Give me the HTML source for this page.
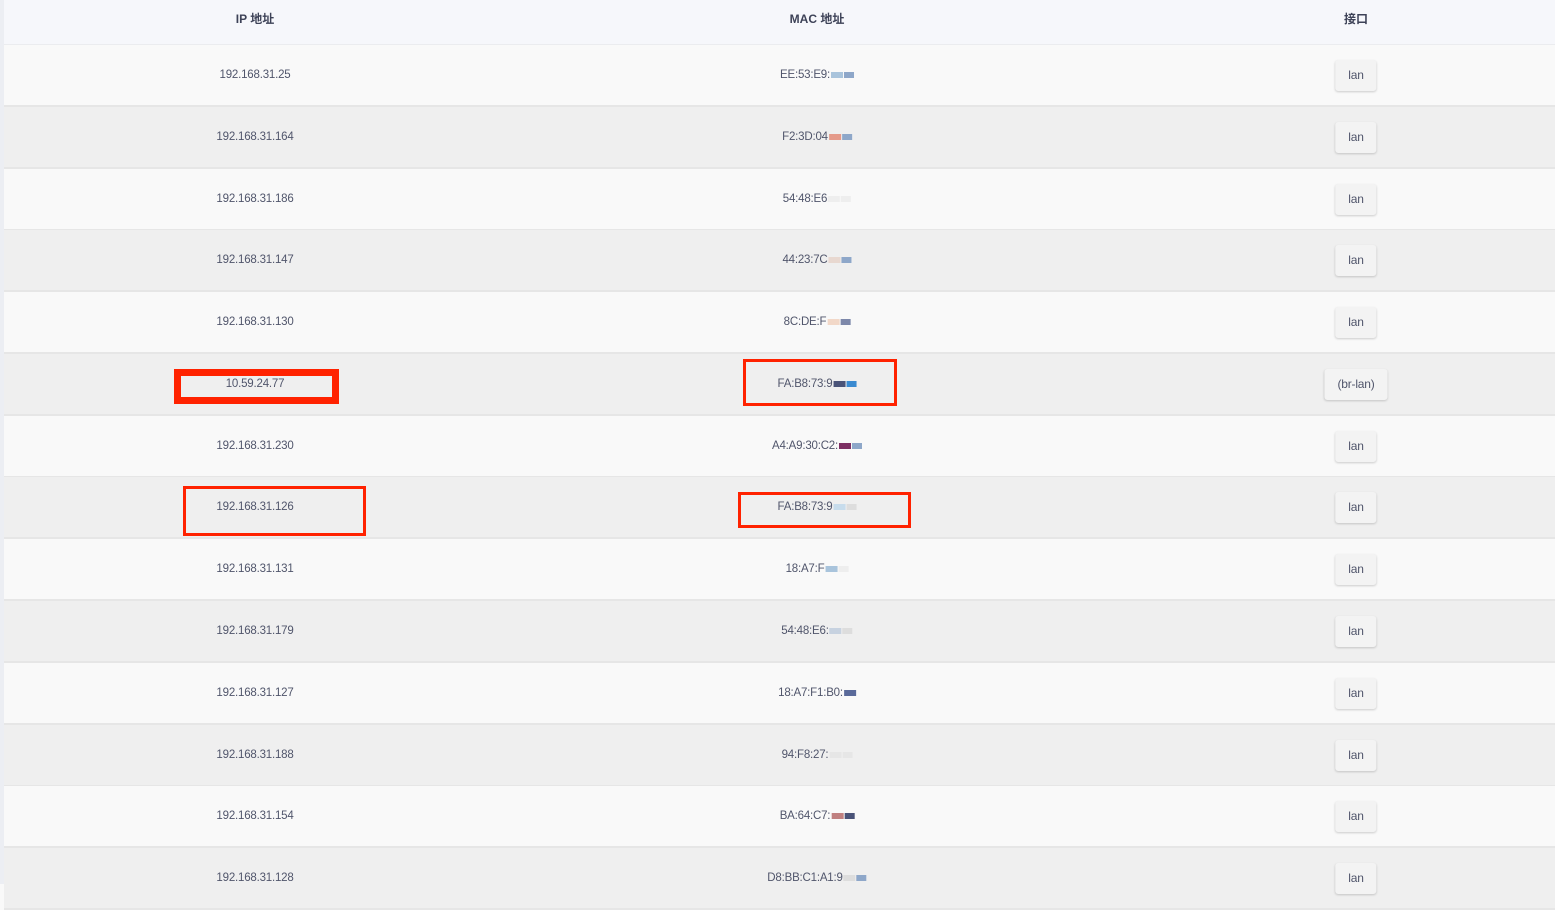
<!DOCTYPE html>
<html><head><meta charset="utf-8"><style>
body{margin:0;width:1555px;height:884px;overflow:hidden;background:#f9f9f9;font-family:"Liberation Sans","Noto Sans CJK SC",sans-serif;color:#50556b;position:relative}
.strip{position:absolute;left:0;top:0;width:4px;height:884px;background:#eceef3;z-index:5}
.hdr{position:absolute;left:4px;top:0;width:1551px;height:44px;background:#f6f7fb;border-bottom:2px solid #ebecef;font-size:12px;font-weight:bold;color:#3d4257}
.hdr .c{height:37px}
.row{position:absolute;left:4px;width:1551px;height:60px;border-bottom:2px solid #e6e6e6;font-size:11.5px;letter-spacing:-0.2px;background:#f9f9f9}
.e{background:#efefef}
.c{position:absolute;top:0;height:100%;display:flex;align-items:center;justify-content:center;transform:translateX(-50%);white-space:nowrap}
.ip{left:251px}.mac{left:813px}.if{left:1352px}
.b{background:#f3f3f3;border-radius:3px;box-shadow:0 1px 2px rgba(0,0,0,.18);height:31px;padding:0 13px;display:flex;align-items:center;font-size:12px}
.k{display:inline-block;height:6px;margin-left:1px;vertical-align:middle;width:12px;background:#a9c4dc}
.k2{display:inline-block;height:6px;margin-left:1px;vertical-align:middle;width:10px;background:#8ea7c9}
.red{position:absolute;border:3px solid #ff2200;box-sizing:border-box;z-index:6}
</style></head><body>
<div class="strip"></div>
<div class="hdr">
<div class="c ip">IP 地址</div>
<div class="c mac">MAC 地址</div>
<div class="c if">接口</div>
</div>
<div class="row" style="top:45px"><div class="c ip">192.168.31.25</div><div class="c mac">EE:53:E9:<span class="k"></span><span class="k2"></span></div><div class="c if"><div class="b">lan</div></div></div>
<div class="row e" style="top:107px"><div class="c ip">192.168.31.164</div><div class="c mac">F2:3D:04<span class="k" style="background:#e59a8a"></span><span class="k2"></span></div><div class="c if"><div class="b">lan</div></div></div>
<div class="row" style="top:169px"><div class="c ip">192.168.31.186</div><div class="c mac">54:48:E6<span class="k" style="background:#eee"></span><span class="k2" style="background:#eee"></span></div><div class="c if"><div class="b">lan</div></div></div>
<div class="row e" style="top:230px"><div class="c ip">192.168.31.147</div><div class="c mac">44:23:7C<span class="k" style="background:#e8d8d0"></span><span class="k2"></span></div><div class="c if"><div class="b">lan</div></div></div>
<div class="row" style="top:292px"><div class="c ip">192.168.31.130</div><div class="c mac">8C:DE:F<span class="k" style="background:#f2d8c8"></span><span class="k2" style="background:#7d88aa"></span></div><div class="c if"><div class="b">lan</div></div></div>
<div class="row e" style="top:354px"><div class="c ip">10.59.24.77</div><div class="c mac">FA:B8:73:9<span class="k" style="background:#4a5378"></span><span class="k2" style="background:#3a8ad0"></span></div><div class="c if"><div class="b">(br-lan)</div></div></div>
<div class="row" style="top:416px"><div class="c ip">192.168.31.230</div><div class="c mac">A4:A9:30:C2:<span class="k" style="background:#7d2f63"></span><span class="k2"></span></div><div class="c if"><div class="b">lan</div></div></div>
<div class="row e" style="top:477px"><div class="c ip">192.168.31.126</div><div class="c mac">FA:B8:73:9<span class="k" style="background:#c7dcec"></span><span class="k2" style="background:#ddd"></span></div><div class="c if"><div class="b">lan</div></div></div>
<div class="row" style="top:539px"><div class="c ip">192.168.31.131</div><div class="c mac">18:A7:F<span class="k"></span><span class="k2" style="background:#eee"></span></div><div class="c if"><div class="b">lan</div></div></div>
<div class="row e" style="top:601px"><div class="c ip">192.168.31.179</div><div class="c mac">54:48:E6:<span class="k" style="background:#c7d2e0"></span><span class="k2" style="background:#ddd"></span></div><div class="c if"><div class="b">lan</div></div></div>
<div class="row" style="top:663px"><div class="c ip">192.168.31.127</div><div class="c mac">18:A7:F1:B0:<span class="k" style="background:#5a6a9a"></span></div><div class="c if"><div class="b">lan</div></div></div>
<div class="row e" style="top:725px"><div class="c ip">192.168.31.188</div><div class="c mac">94:F8:27:<span class="k" style="background:#e6e6e6"></span><span class="k2" style="background:#e6e6e6"></span></div><div class="c if"><div class="b">lan</div></div></div>
<div class="row" style="top:786px"><div class="c ip">192.168.31.154</div><div class="c mac">BA:64:C7:<span class="k" style="background:#c08080"></span><span class="k2" style="background:#4a5378"></span></div><div class="c if"><div class="b">lan</div></div></div>
<div class="row e" style="top:848px"><div class="c ip">192.168.31.128</div><div class="c mac">D8:BB:C1:A1:9<span class="k" style="background:#ddd"></span><span class="k2"></span></div><div class="c if"><div class="b">lan</div></div></div>
<div class="red" style="left:174px;top:369px;width:165px;height:35px;border-width:7px"></div>
<div class="red" style="left:743px;top:359px;width:154px;height:47px;border-width:3px"></div>
<div class="red" style="left:183px;top:486px;width:183px;height:50px;border-width:3px"></div>
<div class="red" style="left:738px;top:492px;width:173px;height:36px;border-width:3px"></div>
</body></html>
